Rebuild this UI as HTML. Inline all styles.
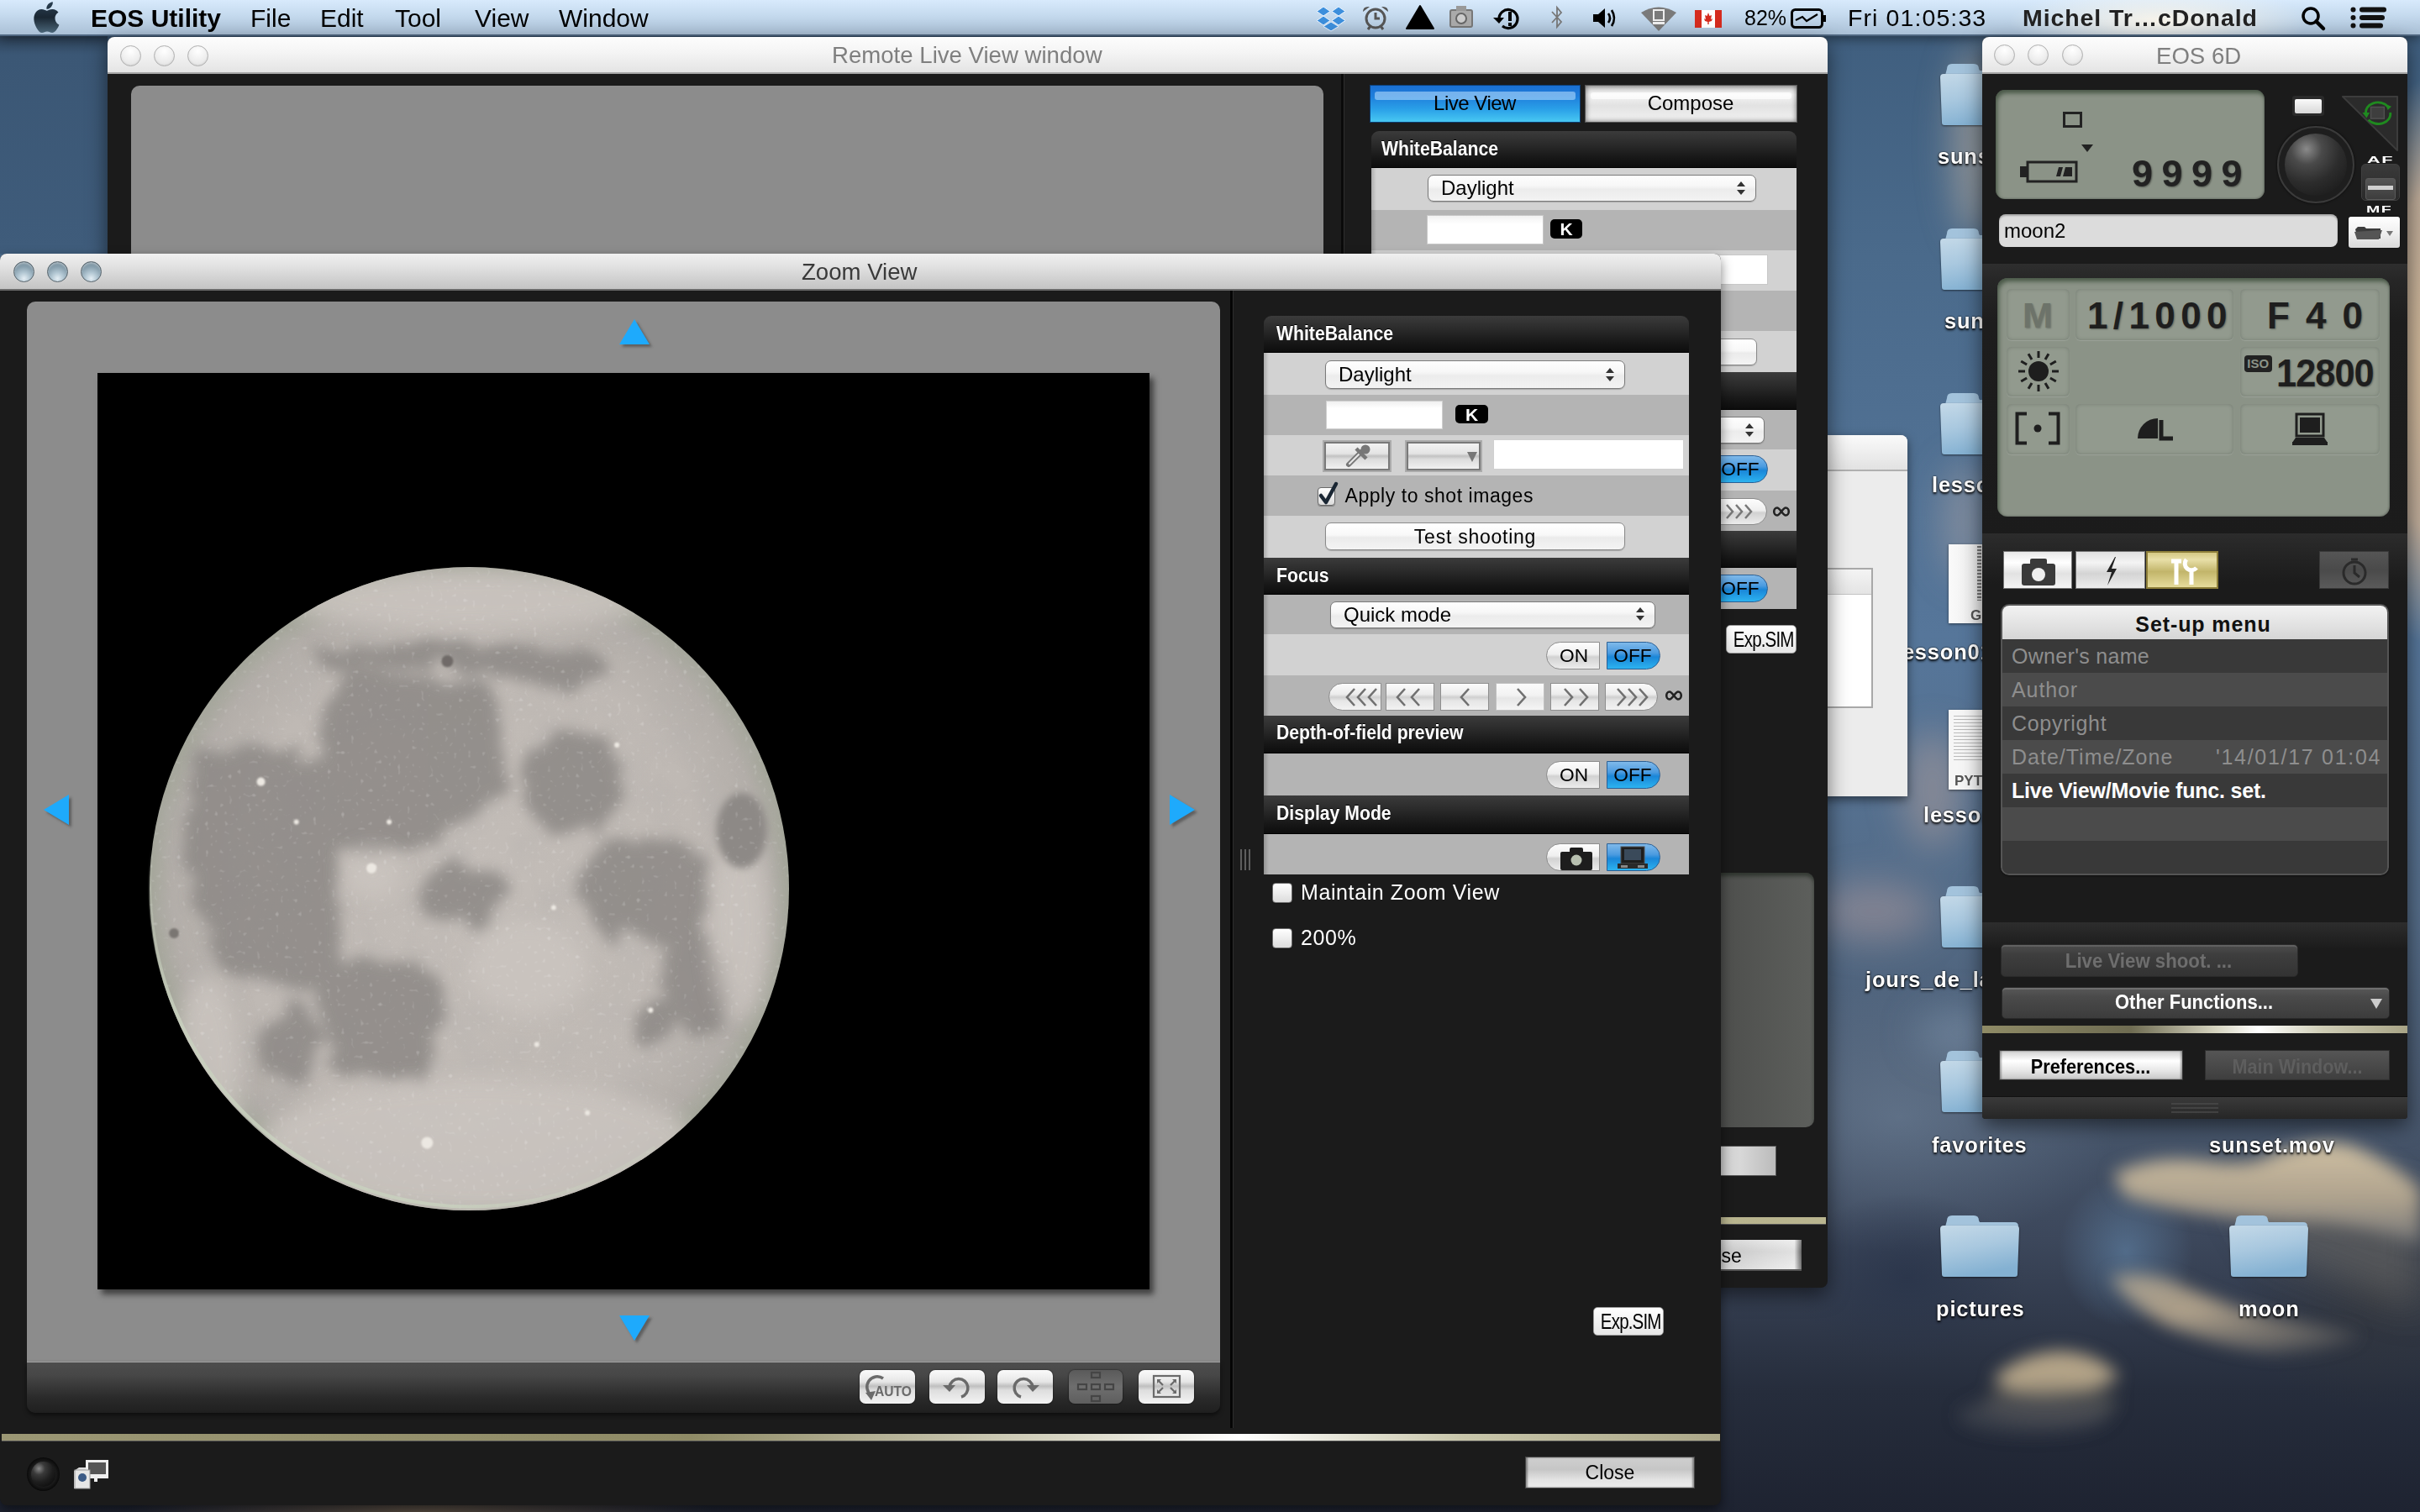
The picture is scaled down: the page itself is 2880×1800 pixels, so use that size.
<!DOCTYPE html>
<html><head><meta charset="utf-8">
<style>
*{margin:0;padding:0;box-sizing:border-box}
html,body{width:2880px;height:1800px;overflow:hidden;background:#3b5876;font-family:"Liberation Sans",sans-serif}
.a{position:absolute}
.t{position:absolute;white-space:nowrap;line-height:1;font-family:"Liberation Sans",sans-serif}
svg.a{overflow:visible}
</style></head><body>
<svg class="a" style="left:0px;top:0px;" width="2880" height="1800" viewBox="0 0 2880 1800"><defs>
<linearGradient id="sky" x1="0" y1="0" x2="0" y2="1">
<stop offset="0" stop-color="#3e5d7d"/><stop offset=".17" stop-color="#4a6a8b"/><stop offset=".42" stop-color="#56769a"/>
<stop offset=".6" stop-color="#546c88"/><stop offset=".72" stop-color="#4a5a70"/><stop offset=".82" stop-color="#3c475b"/>
<stop offset=".92" stop-color="#262d3c"/><stop offset="1" stop-color="#1e2331"/></linearGradient>
<filter id="cb1" x="-50%" y="-50%" width="200%" height="200%"><feGaussianBlur stdDeviation="10"/></filter>
<filter id="cb2" x="-50%" y="-50%" width="200%" height="200%"><feGaussianBlur stdDeviation="22"/></filter>
<filter id="cb3" x="-50%" y="-50%" width="200%" height="200%"><feGaussianBlur stdDeviation="40"/></filter>
</defs>
<rect width="2880" height="1800" fill="url(#sky)"/>
<radialGradient id="dk1"><stop offset="0" stop-color="#283349" stop-opacity=".75"/><stop offset="1" stop-color="#283349" stop-opacity="0"/></radialGradient>
<radialGradient id="dk2"><stop offset="0" stop-color="#323438" stop-opacity=".9"/><stop offset="1" stop-color="#323438" stop-opacity="0"/></radialGradient>
<radialGradient id="bl1"><stop offset="0" stop-color="#5c7c9e" stop-opacity=".7"/><stop offset="1" stop-color="#5c7c9e" stop-opacity="0"/></radialGradient>
<radialGradient id="bg1"><stop offset="0" stop-color="#d2b896"/><stop offset=".6" stop-color="#c8b098" stop-opacity=".9"/><stop offset="1" stop-color="#cdb89e" stop-opacity="0"/></radialGradient>
<radialGradient id="br1"><stop offset="0" stop-color="#6a5a48" stop-opacity=".8"/><stop offset="1" stop-color="#6a5a48" stop-opacity="0"/></radialGradient>
<linearGradient id="cA" x1="0" y1="0" x2="0" y2="1"><stop offset="0" stop-color="#dccaa8"/><stop offset=".55" stop-color="#b8aa92"/><stop offset="1" stop-color="#77787a"/></linearGradient>
<linearGradient id="cB" x1="0" y1="0" x2="1" y2="1"><stop offset="0" stop-color="#c2b296" stop-opacity=".9"/><stop offset=".4" stop-color="#cdb999"/><stop offset=".75" stop-color="#9a9080" stop-opacity=".7"/><stop offset="1" stop-color="#6a6a6a" stop-opacity=".2"/></linearGradient>
<radialGradient id="lg1"><stop offset="0" stop-color="#71849b" stop-opacity=".55"/><stop offset="1" stop-color="#71849b" stop-opacity="0"/></radialGradient>
<ellipse cx="2260" cy="1330" rx="260" ry="160" fill="url(#lg1)"/>
<ellipse cx="2270" cy="1520" rx="140" ry="100" fill="url(#dk1)"/>
<ellipse cx="2830" cy="1540" rx="170" ry="140" fill="url(#dk2)" opacity=".8"/>
<ellipse cx="2530" cy="1490" rx="80" ry="90" fill="url(#bl1)"/>
<ellipse cx="2900" cy="430" rx="120" ry="340" fill="url(#bg1)"/>
<ellipse cx="500" cy="1800" rx="350" ry="50" fill="url(#br1)"/>
<g filter="url(#cb2)">
<ellipse cx="2352" cy="170" rx="28" ry="115" fill="#cdb9a6" opacity=".55"/>
<ellipse cx="2340" cy="620" rx="30" ry="70" fill="#c0b0a8" opacity=".4"/>
<ellipse cx="2230" cy="1085" rx="70" ry="35" fill="#b8a0a0" opacity=".45"/>
<ellipse cx="2300" cy="940" rx="35" ry="70" fill="#c0a8a0" opacity=".45"/>
<ellipse cx="2330" cy="1230" rx="50" ry="30" fill="#8aa0b8" opacity=".4"/>
<path d="M2660 1420 Q2760 1400 2880 1420 L2880 1560 Q2800 1530 2700 1490Z" fill="#605f60" opacity=".7"/>
</g>
<g filter="url(#cb1)">
<path d="M2515 1398 Q2560 1375 2620 1382 Q2680 1390 2700 1376 Q2760 1352 2800 1364 Q2850 1385 2880 1415 L2880 1480 Q2820 1460 2760 1455 Q2700 1455 2640 1448 Q2580 1440 2530 1425Z" fill="url(#cA)" opacity=".92"/>
<path d="M2512 1520 Q2560 1510 2600 1532 Q2650 1555 2700 1568 Q2760 1580 2810 1588 Q2770 1612 2700 1610 Q2640 1602 2580 1578 Q2530 1552 2512 1520Z" fill="url(#cB)" opacity=".8"/>
<path d="M2372 1642 Q2400 1612 2450 1608 Q2500 1610 2522 1640 Q2490 1658 2440 1660 Q2392 1662 2372 1642Z" fill="#cbb794" opacity=".85"/>
<ellipse cx="2440" cy="1670" rx="80" ry="22" fill="#6a6760" opacity=".5"/>
<ellipse cx="2420" cy="1685" rx="90" ry="22" fill="#50525a" opacity=".5"/>
</g></svg>
<div class="a" style="left:0.0px;top:43.0px;width:128.0px;height:259.0px;background:linear-gradient(180deg,#2e435a 0px,#3b5775 22px,#3f5c7b 100%)"></div>
<svg class="a" style="left:2305px;top:73px;" width="102" height="80" viewBox="0 0 102 80"><defs><linearGradient id="fg230573" x1="0" y1="0" x2="0.3" y2="1"><stop offset="0" stop-color="#c4d9e8"/><stop offset=".5" stop-color="#a9c8df"/><stop offset="1" stop-color="#84b1d2"/></linearGradient></defs>
<path d="M12 9 Q12 3 18 3 L44 3 Q50 3 50 9 L51 11 L92 11 Q97 11 97 16 L97 20 L9 20 Z" fill="#a3c3dc"/>
<path d="M4 19 Q4 15 8 15 L94 15 Q98 15 98 19 L96 73 Q96 76 93 76 L9 76 Q6 76 6 73 Z" fill="url(#fg230573)" style="filter:drop-shadow(0 1.5px 1px rgba(0,0,0,.55))"/></svg>
<svg class="a" style="left:2305px;top:269px;" width="102" height="80" viewBox="0 0 102 80"><defs><linearGradient id="fg2305269" x1="0" y1="0" x2="0.3" y2="1"><stop offset="0" stop-color="#c4d9e8"/><stop offset=".5" stop-color="#a9c8df"/><stop offset="1" stop-color="#84b1d2"/></linearGradient></defs>
<path d="M12 9 Q12 3 18 3 L44 3 Q50 3 50 9 L51 11 L92 11 Q97 11 97 16 L97 20 L9 20 Z" fill="#a3c3dc"/>
<path d="M4 19 Q4 15 8 15 L94 15 Q98 15 98 19 L96 73 Q96 76 93 76 L9 76 Q6 76 6 73 Z" fill="url(#fg2305269)" style="filter:drop-shadow(0 1.5px 1px rgba(0,0,0,.55))"/></svg>
<svg class="a" style="left:2305px;top:465px;" width="102" height="80" viewBox="0 0 102 80"><defs><linearGradient id="fg2305465" x1="0" y1="0" x2="0.3" y2="1"><stop offset="0" stop-color="#c4d9e8"/><stop offset=".5" stop-color="#a9c8df"/><stop offset="1" stop-color="#84b1d2"/></linearGradient></defs>
<path d="M12 9 Q12 3 18 3 L44 3 Q50 3 50 9 L51 11 L92 11 Q97 11 97 16 L97 20 L9 20 Z" fill="#a3c3dc"/>
<path d="M4 19 Q4 15 8 15 L94 15 Q98 15 98 19 L96 73 Q96 76 93 76 L9 76 Q6 76 6 73 Z" fill="url(#fg2305465)" style="filter:drop-shadow(0 1.5px 1px rgba(0,0,0,.55))"/></svg>
<svg class="a" style="left:2305px;top:1052px;" width="102" height="80" viewBox="0 0 102 80"><defs><linearGradient id="fg23051052" x1="0" y1="0" x2="0.3" y2="1"><stop offset="0" stop-color="#c4d9e8"/><stop offset=".5" stop-color="#a9c8df"/><stop offset="1" stop-color="#84b1d2"/></linearGradient></defs>
<path d="M12 9 Q12 3 18 3 L44 3 Q50 3 50 9 L51 11 L92 11 Q97 11 97 16 L97 20 L9 20 Z" fill="#a3c3dc"/>
<path d="M4 19 Q4 15 8 15 L94 15 Q98 15 98 19 L96 73 Q96 76 93 76 L9 76 Q6 76 6 73 Z" fill="url(#fg23051052)" style="filter:drop-shadow(0 1.5px 1px rgba(0,0,0,.55))"/></svg>
<svg class="a" style="left:2305px;top:1248px;" width="102" height="80" viewBox="0 0 102 80"><defs><linearGradient id="fg23051248" x1="0" y1="0" x2="0.3" y2="1"><stop offset="0" stop-color="#c4d9e8"/><stop offset=".5" stop-color="#a9c8df"/><stop offset="1" stop-color="#84b1d2"/></linearGradient></defs>
<path d="M12 9 Q12 3 18 3 L44 3 Q50 3 50 9 L51 11 L92 11 Q97 11 97 16 L97 20 L9 20 Z" fill="#a3c3dc"/>
<path d="M4 19 Q4 15 8 15 L94 15 Q98 15 98 19 L96 73 Q96 76 93 76 L9 76 Q6 76 6 73 Z" fill="url(#fg23051248)" style="filter:drop-shadow(0 1.5px 1px rgba(0,0,0,.55))"/></svg>
<svg class="a" style="left:2305px;top:1444px;" width="102" height="80" viewBox="0 0 102 80"><defs><linearGradient id="fg23051444" x1="0" y1="0" x2="0.3" y2="1"><stop offset="0" stop-color="#c4d9e8"/><stop offset=".5" stop-color="#a9c8df"/><stop offset="1" stop-color="#84b1d2"/></linearGradient></defs>
<path d="M12 9 Q12 3 18 3 L44 3 Q50 3 50 9 L51 11 L92 11 Q97 11 97 16 L97 20 L9 20 Z" fill="#a3c3dc"/>
<path d="M4 19 Q4 15 8 15 L94 15 Q98 15 98 19 L96 73 Q96 76 93 76 L9 76 Q6 76 6 73 Z" fill="url(#fg23051444)" style="filter:drop-shadow(0 1.5px 1px rgba(0,0,0,.55))"/></svg>
<svg class="a" style="left:2649px;top:1444px;" width="102" height="80" viewBox="0 0 102 80"><defs><linearGradient id="fg26491444" x1="0" y1="0" x2="0.3" y2="1"><stop offset="0" stop-color="#c4d9e8"/><stop offset=".5" stop-color="#a9c8df"/><stop offset="1" stop-color="#84b1d2"/></linearGradient></defs>
<path d="M12 9 Q12 3 18 3 L44 3 Q50 3 50 9 L51 11 L92 11 Q97 11 97 16 L97 20 L9 20 Z" fill="#a3c3dc"/>
<path d="M4 19 Q4 15 8 15 L94 15 Q98 15 98 19 L96 73 Q96 76 93 76 L9 76 Q6 76 6 73 Z" fill="url(#fg26491444)" style="filter:drop-shadow(0 1.5px 1px rgba(0,0,0,.55))"/></svg>
<div class="a" style="left:2319.0px;top:648.0px;width:51.0px;height:94.0px;background:linear-gradient(90deg,#fafafa,#e8e8e8);box-shadow:0 1px 3px rgba(0,0,0,.5)"></div>
<div class="a" style="left:2353.0px;top:650.0px;width:5.0px;height:65.0px;background:repeating-linear-gradient(180deg,#777 0 2px,#ddd 2px 4px)"></div>
<div class="t" style="left:2345.0px;top:723.6px;font-size:17px;color:#555;font-weight:bold;">G</div>
<div class="a" style="left:2319.0px;top:845.0px;width:51.0px;height:95.0px;background:#f6f6f6;box-shadow:0 1px 3px rgba(0,0,0,.5)"></div>
<div class="a" style="left:2325.0px;top:852.0px;width:40.0px;height:53.0px;background:repeating-linear-gradient(180deg,#bbb 0 1px,transparent 1px 4px)"></div>
<div class="t" style="left:2326.0px;top:920.6px;font-size:17px;color:#555;font-weight:bold;">PYTH</div>
<div class="t" style="left:2306.0px;top:174.4px;font-size:25.5px;color:#fff;font-weight:bold;text-shadow:0 2px 3px rgba(0,0,0,.95),0 0 2px #000;letter-spacing:.8px">sunset</div>
<div class="t" style="left:2314.0px;top:370.4px;font-size:25.5px;color:#fff;font-weight:bold;text-shadow:0 2px 3px rgba(0,0,0,.95),0 0 2px #000;letter-spacing:.8px">sunrise</div>
<div class="t" style="left:2299.0px;top:565.4px;font-size:25.5px;color:#fff;font-weight:bold;text-shadow:0 2px 3px rgba(0,0,0,.95),0 0 2px #000;letter-spacing:.8px">lessons</div>
<div class="t" style="left:2256.0px;top:764.4px;font-size:25.5px;color:#fff;font-weight:bold;text-shadow:0 2px 3px rgba(0,0,0,.95),0 0 2px #000;letter-spacing:.8px">lesson01.zip</div>
<div class="t" style="left:2289.0px;top:958.4px;font-size:25.5px;color:#fff;font-weight:bold;text-shadow:0 2px 3px rgba(0,0,0,.95),0 0 2px #000;letter-spacing:.8px">lessons</div>
<div class="t" style="left:2220.0px;top:1154.4px;font-size:25.5px;color:#fff;font-weight:bold;text-shadow:0 2px 3px rgba(0,0,0,.95),0 0 2px #000;letter-spacing:.8px">jours_de_la_lune</div>
<div class="t" style="left:2299.0px;top:1351.4px;font-size:25.5px;color:#fff;font-weight:bold;text-shadow:0 2px 3px rgba(0,0,0,.95),0 0 2px #000;letter-spacing:.8px">favorites</div>
<div class="t" style="left:2629.0px;top:1351.4px;font-size:25.5px;color:#fff;font-weight:bold;text-shadow:0 2px 3px rgba(0,0,0,.95),0 0 2px #000;letter-spacing:.8px">sunset.mov</div>
<div class="t" style="left:2304.0px;top:1546.4px;font-size:25.5px;color:#fff;font-weight:bold;text-shadow:0 2px 3px rgba(0,0,0,.95),0 0 2px #000;letter-spacing:.8px">pictures</div>
<div class="t" style="left:2664.0px;top:1546.4px;font-size:25.5px;color:#fff;font-weight:bold;text-shadow:0 2px 3px rgba(0,0,0,.95),0 0 2px #000;letter-spacing:.8px">moon</div>
<div class="a" style="left:2100.0px;top:518.0px;width:170.0px;height:430.0px;background:#ececec;border-radius:8px 8px 0 0;box-shadow:0 4px 12px rgba(0,0,0,.5)"></div>
<div class="a" style="left:2100.0px;top:518.0px;width:170.0px;height:43.0px;background:linear-gradient(180deg,#fafafa,#e2e2e2);border-bottom:2px solid #b0b0b0;border-radius:8px 8px 0 0"></div>
<div class="a" style="left:2100.0px;top:676.0px;width:129.0px;height:167.0px;background:#fff;border:2px solid #a8a8a8"></div>
<div class="a" style="left:2102.0px;top:678.0px;width:125.0px;height:30.0px;background:linear-gradient(180deg,#f4f4f4,#e4e4e4);border-bottom:1px solid #c4c4c4"></div>
<div class="a" style="left:0.0px;top:0.0px;width:2880.0px;height:43.0px;background:linear-gradient(180deg,#d8eafc 0%,#c6dbef 40%,#a8bed4 100%);box-shadow:0 3px 14px rgba(0,0,0,.45)"></div>
<div class="a" style="left:2380.0px;top:0.0px;width:380.0px;height:43.0px;background:radial-gradient(ellipse 180px 40px at 190px 25px,rgba(255,248,235,.9),rgba(255,248,235,0) 100%)"></div>
<div class="a" style="left:0.0px;top:41.0px;width:2880.0px;height:2.0px;background:#4e6680"></div>
<svg class="a" style="left:38px;top:2px;" width="34" height="37" viewBox="0 0 34 37"><defs><linearGradient id="apg" x1="0" y1="0" x2="0" y2="1"><stop offset="0" stop-color="#2a3f52"/><stop offset=".5" stop-color="#1a2733"/><stop offset="1" stop-color="#4a6578"/></linearGradient></defs>
<path d="M27.5 19.6c0-4.6 3.8-6.8 4-6.9-2.2-3.2-5.6-3.6-6.8-3.7-2.9-.3-5.6 1.7-7.1 1.7-1.5 0-3.7-1.7-6.1-1.6-3.1 0-6 1.8-7.6 4.7-3.3 5.6-.8 14 2.4 18.6 1.6 2.2 3.4 4.8 5.8 4.7 2.3-.1 3.2-1.5 6-1.5s3.6 1.5 6.1 1.5c2.5 0 4.1-2.3 5.6-4.5 1.8-2.6 2.5-5.1 2.5-5.2-.1 0-4.8-1.8-4.8-7.8zM22.9 6.2c1.3-1.6 2.2-3.7 1.9-5.9-1.9.1-4.1 1.3-5.5 2.8-1.2 1.4-2.2 3.6-1.9 5.7 2.1.2 4.2-1 5.5-2.6z" fill="url(#apg)"/></svg>
<div class="t" style="left:108.0px;top:7.0px;font-size:30px;color:#000;font-weight:bold;">EOS Utility</div>
<div class="t" style="left:298.0px;top:7.0px;font-size:30px;color:#000;font-weight:normal;">File</div>
<div class="t" style="left:381.0px;top:7.0px;font-size:30px;color:#000;font-weight:normal;">Edit</div>
<div class="t" style="left:470.0px;top:7.0px;font-size:30px;color:#000;font-weight:normal;">Tool</div>
<div class="t" style="left:565.0px;top:7.0px;font-size:30px;color:#000;font-weight:normal;">View</div>
<div class="t" style="left:665.0px;top:7.0px;font-size:30px;color:#000;font-weight:normal;">Window</div>
<div class="t" style="left:2076.0px;top:8.8px;font-size:25px;color:#000;font-weight:normal;">82%</div>
<div class="t" style="left:2199.0px;top:7.1px;font-size:28.5px;color:#000;font-weight:normal;letter-spacing:1.1px">Fri 01:05:33</div>
<div class="t" style="left:2407.0px;top:7.1px;font-size:28.5px;color:#222;font-weight:bold;letter-spacing:.9px">Michel Tr…cDonald</div>
<svg class="a" style="left:1566px;top:6px;" width="36" height="32" viewBox="0 0 36 32"><g fill="#3d8fdc" stroke="#eaf4ff" stroke-width="1"><path d="M9 2 L1 7.5 L9 13 L17 7.5Z"/><path d="M27 2 L19 7.5 L27 13 L35 7.5Z"/><path d="M1 18.5 L9 13 L17 18.5 L9 24Z"/><path d="M35 18.5 L27 13 L19 18.5 L27 24Z"/><path d="M9 25.5 L18 20 L27 25.5 L18 31Z"/></g></svg>
<svg class="a" style="left:1619px;top:5px;" width="36" height="31" viewBox="0 0 36 31"><g fill="none" stroke="#555" stroke-width="3"><circle cx="18" cy="17" r="11"/><path d="M18 10 V17 H23"/><path d="M9 30 L12 26 M27 30 L24 26"/></g><path d="M3 9 Q3 2 11 3 Z M33 9 Q33 2 25 3Z" fill="#555"/></svg>
<svg class="a" style="left:1673px;top:6px;" width="34" height="29" viewBox="0 0 34 29"><path d="M17 1 L33 28 L1 28Z" fill="#000" stroke="#000" stroke-width="2" stroke-linejoin="round"/></svg>
<svg class="a" style="left:1725px;top:6px;" width="28" height="27" viewBox="0 0 28 27"><rect x="1" y="6" width="26" height="20" rx="2" fill="#aaa" stroke="#777" stroke-width="2"/><rect x="8" y="1" width="12" height="6" fill="#999"/><circle cx="14" cy="16" r="6" fill="#ccc" stroke="#666" stroke-width="2"/></svg>
<svg class="a" style="left:1776px;top:6px;" width="35" height="31" viewBox="0 0 35 31"><path d="M8 17 A11 11 0 1 1 12 25" fill="none" stroke="#000" stroke-width="3.2"/><path d="M1 15 L8 22 L14 15Z" fill="#000"/><rect x="19" y="8" width="4" height="11" fill="#000"/><rect x="19" y="21" width="4" height="4" fill="#000"/></svg>
<svg class="a" style="left:1845px;top:6px;" width="16" height="30" viewBox="0 0 16 30"><path d="M2 8 L13 20 L8 26 V3 L13 9 L2 21" fill="none" stroke="#777" stroke-width="1.8"/></svg>
<svg class="a" style="left:1895px;top:9px;" width="29" height="25" viewBox="0 0 29 25"><path d="M1 8 H7 L15 1 V24 L7 17 H1Z" fill="#000"/><path d="M19 7 Q23 12.5 19 18 M23 3 Q29 12.5 23 22" fill="none" stroke="#000" stroke-width="2.6"/></svg>
<svg class="a" style="left:1952px;top:6px;" width="44" height="32" viewBox="0 0 44 32"><path d="M1 9 Q22 -4 43 9 L22 31Z" fill="#7a7a7a"/><rect x="16" y="6" width="12" height="12" fill="none" stroke="#eee" stroke-width="2"/><rect x="15" y="20" width="14" height="3" fill="#eee"/></svg>
<svg class="a" style="left:2017px;top:12px;" width="32" height="21" viewBox="0 0 32 21"><rect x="0" y="0" width="32" height="21" fill="#fff"/><rect x="0" y="0" width="8" height="21" fill="#d52b1e"/><rect x="24" y="0" width="8" height="21" fill="#d52b1e"/><path d="M16 3 L17.5 7 L20 6 L19 11 L21 10 L20 13 L16.7 14 V17 H15.3 V14 L12 13 L11 10 L13 11 L12 6 L14.5 7Z" fill="#d52b1e"/></svg>
<svg class="a" style="left:2131px;top:10px;" width="43" height="24" viewBox="0 0 43 24"><rect x="1.5" y="1.5" width="36" height="21" rx="4" fill="none" stroke="#000" stroke-width="3"/><rect x="38" y="8" width="4" height="8" fill="#000"/><path d="M6 14 L14 10 L19 15 L32 7" fill="none" stroke="#000" stroke-width="2.2"/></svg>
<svg class="a" style="left:2738px;top:7px;" width="30" height="29" viewBox="0 0 30 29"><circle cx="12" cy="12" r="9" fill="none" stroke="#000" stroke-width="3.5"/><path d="M18.5 18.5 L27 27" stroke="#000" stroke-width="4.5" stroke-linecap="round"/></svg>
<svg class="a" style="left:2797px;top:8px;" width="44" height="26" viewBox="0 0 44 26"><g fill="#111"><circle cx="3.5" cy="3.5" r="3"/><circle cx="3.5" cy="13" r="3"/><circle cx="3.5" cy="22.5" r="3"/><rect x="11" y="0.5" width="32" height="6" rx="3"/><rect x="11" y="10" width="30" height="6" rx="3"/><rect x="11" y="19.5" width="28" height="6" rx="3"/></g></svg>
<div class="a" style="left:128.0px;top:44.0px;width:2047.0px;height:1489.0px;background:#1b1b1b;border-radius:8px;box-shadow:0 8px 24px rgba(0,0,0,.55)"></div>
<div class="a" style="left:128.0px;top:44.0px;width:2047.0px;height:44.0px;background:linear-gradient(180deg,#fdfdfd 0%,#f4f4f4 45%,#e4e4e4 100%);border-radius:8px 8px 0 0;border-bottom:2px solid #a6a6a6"></div>
<div class="a" style="left:143.0px;top:53.5px;width:25.0px;height:25.0px;border-radius:50%;background:radial-gradient(circle at 50% 25%,#ffffff 0%,#f0f0f0 50%,#e6e6e6 80%,#f4f4f4 100%);border:1px solid #b0b0b0;box-shadow:inset 0 -1px 2px rgba(0,0,0,.08)"></div><div class="a" style="left:183.2px;top:53.5px;width:25.0px;height:25.0px;border-radius:50%;background:radial-gradient(circle at 50% 25%,#ffffff 0%,#f0f0f0 50%,#e6e6e6 80%,#f4f4f4 100%);border:1px solid #b0b0b0;box-shadow:inset 0 -1px 2px rgba(0,0,0,.08)"></div><div class="a" style="left:223.2px;top:53.5px;width:25.0px;height:25.0px;border-radius:50%;background:radial-gradient(circle at 50% 25%,#ffffff 0%,#f0f0f0 50%,#e6e6e6 80%,#f4f4f4 100%);border:1px solid #b0b0b0;box-shadow:inset 0 -1px 2px rgba(0,0,0,.08)"></div>
<div class="t" style="left:990.0px;top:52.1px;font-size:27.6px;color:#7f7f7f;font-weight:normal;">Remote Live View window</div>
<div class="a" style="left:156.0px;top:102.0px;width:1419.0px;height:1378.0px;background:#8c8c8c;border-radius:10px 10px 0 0"></div>
<div class="a" style="left:1596.0px;top:88.0px;width:4.0px;height:1445.0px;background:#0a0a0a;border-right:1px solid #2e2e2e"></div>
<div class="a" style="left:1630.0px;top:101.0px;width:251.0px;height:45.0px;background:linear-gradient(180deg,#1a6fd2 0%,#1f7fdc 30%,#2aa0e8 65%,#48c8f2 100%);border:1px solid #0d3e75"></div>
<div class="a" style="left:1636.0px;top:109.0px;width:239.0px;height:10.0px;background:rgba(190,225,255,.55);border-radius:3px"></div>
<div class="t" style="left:1455.0px;width:600px;text-align:center;top:111.2px;font-size:24px;color:#000;font-weight:normal;letter-spacing:-.5px">Live View</div>
<div class="a" style="left:1886.0px;top:101.0px;width:253.0px;height:45.0px;background:linear-gradient(180deg,#cfcfcf 0%,#f4f4f4 25%,#e2e2e2 55%,#f2f2f2 100%);border:1px solid #555;box-shadow:inset 0 0 6px rgba(0,0,0,.55)"></div>
<div class="a" style="left:1893.0px;top:110.0px;width:239.0px;height:8.0px;background:rgba(255,255,255,.7);border-radius:3px"></div>
<div class="t" style="left:1712.0px;width:600px;text-align:center;top:111.2px;font-size:24px;color:#000;font-weight:normal;">Compose</div>
<div class="a" style="left:1632.0px;top:156.0px;width:506.0px;height:44.0px;background:linear-gradient(180deg,#3b3b3b 0%,#2b2b2b 35%,#171717 75%,#0d0d0d 100%);border-radius:9px 9px 0 0;border-bottom:1px solid #000"></div><div class="t" style="left:1644.0px;top:165.8px;font-size:23.3px;color:#fff;font-weight:bold;transform:scaleX(.91);transform-origin:0 0;text-shadow:0 -1px 0 #000">WhiteBalance</div>
<div class="a" style="left:1632.0px;top:200.0px;width:506.0px;height:50.0px;background:linear-gradient(90deg,rgba(0,0,0,.18) 0px,rgba(0,0,0,0) 6px),#d2d2d2"></div>
<div class="a" style="left:1699.0px;top:208.0px;width:391.0px;height:32.0px;border-radius:7px;background:linear-gradient(180deg,#fefefe 0%,#f7f7f7 40%,#ececec 55%,#f3f3f3 100%);border:1.5px solid #7a7a7a;box-shadow:0 1px 1px rgba(0,0,0,.2)"></div><div class="t" style="left:1715.0px;top:212.2px;font-size:24px;color:#000;font-weight:normal;">Daylight</div><svg class="a" style="left:2066px;top:215px;" width="12" height="18" viewBox="0 0 12 18"><path d="M6 1 L11 7 L1 7Z M6 17 L11 11 L1 11Z" fill="#333"/></svg>
<div class="a" style="left:1632.0px;top:250.0px;width:506.0px;height:48.0px;background:linear-gradient(90deg,rgba(0,0,0,.18) 0px,rgba(0,0,0,0) 6px),#b4b4b4"></div>
<div class="a" style="left:1698.0px;top:256.0px;width:139.0px;height:35.0px;background:linear-gradient(180deg,#f2f2f2,#fff 30%);border:1px solid #c8c8c8"></div>
<div class="a" style="left:1845.0px;top:261.0px;width:38.0px;height:23.0px;border-radius:5px;background:#000;color:#fff;font-weight:bold;font-size:21px;text-align:center;line-height:23px;font-family:'Liberation Sans',sans-serif">K</div>
<div class="a" style="left:1632.0px;top:298.0px;width:506.0px;height:48.0px;background:linear-gradient(90deg,rgba(0,0,0,.18) 0px,rgba(0,0,0,0) 6px),#d2d2d2"></div>
<div class="a" style="left:1906.0px;top:303.0px;width:198.0px;height:36.0px;background:#fff;border:1px solid #c8c8c8"></div>
<div class="a" style="left:1632.0px;top:346.0px;width:506.0px;height:48.0px;background:linear-gradient(90deg,rgba(0,0,0,.18) 0px,rgba(0,0,0,0) 6px),#b4b4b4"></div>
<div class="a" style="left:1632.0px;top:394.0px;width:506.0px;height:49.0px;background:linear-gradient(90deg,rgba(0,0,0,.18) 0px,rgba(0,0,0,0) 6px),#d2d2d2"></div>
<div class="a" style="left:1705.0px;top:403.0px;width:386.0px;height:32.0px;border-radius:7px;background:linear-gradient(180deg,#ffffff 0%,#f8f8f8 45%,#ebebeb 55%,#f4f4f4 100%);border:1.5px solid #8a8a8a;box-shadow:0 1px 1px rgba(0,0,0,.2)"></div>
<div class="a" style="left:1632.0px;top:443.0px;width:506.0px;height:45.0px;background:linear-gradient(180deg,#3b3b3b 0%,#2b2b2b 35%,#171717 75%,#0d0d0d 100%);border-radius:0;border-bottom:1px solid #000"></div><div class="t" style="left:1644.0px;top:452.8px;font-size:23.3px;color:#fff;font-weight:bold;transform:scaleX(.91);transform-origin:0 0;text-shadow:0 -1px 0 #000">Focus</div>
<div class="a" style="left:1632.0px;top:488.0px;width:506.0px;height:47.0px;background:linear-gradient(90deg,rgba(0,0,0,.18) 0px,rgba(0,0,0,0) 6px),#b4b4b4"></div>
<div class="a" style="left:1711.0px;top:496.0px;width:389.0px;height:32.0px;border-radius:7px;background:linear-gradient(180deg,#fefefe 0%,#f7f7f7 40%,#ececec 55%,#f3f3f3 100%);border:1.5px solid #7a7a7a;box-shadow:0 1px 1px rgba(0,0,0,.2)"></div><svg class="a" style="left:2076px;top:503px;" width="12" height="18" viewBox="0 0 12 18"><path d="M6 1 L11 7 L1 7Z M6 17 L11 11 L1 11Z" fill="#333"/></svg>
<div class="a" style="left:1632.0px;top:535.0px;width:506.0px;height:49.0px;background:linear-gradient(90deg,rgba(0,0,0,.18) 0px,rgba(0,0,0,0) 6px),#d2d2d2"></div>
<div class="a" style="left:1968.0px;top:542.0px;width:64.0px;height:33.0px;border-radius:17px 0 0 17px;background:linear-gradient(180deg,#fdfdfd 0%,#efefef 45%,#d2d2d2 55%,#ececec 100%);border:1.5px solid #8c8c8c"></div><div class="t" style="left:1961.0px;width:80px;text-align:center;top:547.3px;font-size:22.7px;color:#000;font-weight:normal;">ON</div><div class="a" style="left:2040.0px;top:542.0px;width:64.0px;height:33.0px;border-radius:0 17px 17px 0;background:linear-gradient(180deg,#7fb9ea 0%,#4b9be0 40%,#1a86d8 55%,#2cb3f0 100%);border:1.5px solid #2a5f95"></div><div class="t" style="left:2031.0px;width:80px;text-align:center;top:547.3px;font-size:22.7px;color:#000;font-weight:normal;">OFF</div>
<div class="a" style="left:1632.0px;top:584.0px;width:506.0px;height:48.0px;background:linear-gradient(90deg,rgba(0,0,0,.18) 0px,rgba(0,0,0,0) 6px),#b4b4b4"></div>
<div class="a" style="left:2038.0px;top:593.0px;width:65.0px;height:32.0px;border-radius:0 17px 17px 0;background:linear-gradient(180deg,#fdfdfd 0%,#efefef 45%,#d2d2d2 55%,#ececec 100%);border:1.5px solid #8c8c8c"></div>
<svg class="a" style="left:2052px;top:599px;" width="40" height="20" viewBox="0 0 40 20"><path d="M3 2 L10 10 L3 18 M14 2 L21 10 L14 18 M25 2 L32 10 L25 18" fill="none" stroke="#777" stroke-width="2.5"/></svg>
<svg class="a" style="left:2109px;top:603px;" width="22" height="12" viewBox="0 0 22 12"><path d="M6 1.5 C1 1.5 1 10.5 6 10.5 C9 10.5 13 1.5 16 1.5 C21 1.5 21 10.5 16 10.5 C13 10.5 9 1.5 6 1.5Z" fill="none" stroke="#222" stroke-width="2.6"/></svg>
<div class="a" style="left:1632.0px;top:632.0px;width:506.0px;height:44.0px;background:linear-gradient(180deg,#3b3b3b 0%,#2b2b2b 35%,#171717 75%,#0d0d0d 100%);border-radius:0;border-bottom:1px solid #000"></div><div class="t" style="left:1644.0px;top:641.8px;font-size:23.3px;color:#fff;font-weight:bold;transform:scaleX(.91);transform-origin:0 0;text-shadow:0 -1px 0 #000">Depth-of-field preview</div>
<div class="a" style="left:1632.0px;top:676.0px;width:506.0px;height:49.0px;background:linear-gradient(90deg,rgba(0,0,0,.18) 0px,rgba(0,0,0,0) 6px),#b4b4b4"></div>
<div class="a" style="left:1968.0px;top:684.0px;width:64.0px;height:33.0px;border-radius:17px 0 0 17px;background:linear-gradient(180deg,#fdfdfd 0%,#efefef 45%,#d2d2d2 55%,#ececec 100%);border:1.5px solid #8c8c8c"></div><div class="t" style="left:1961.0px;width:80px;text-align:center;top:689.3px;font-size:22.7px;color:#000;font-weight:normal;">ON</div><div class="a" style="left:2040.0px;top:684.0px;width:64.0px;height:33.0px;border-radius:0 17px 17px 0;background:linear-gradient(180deg,#7fb9ea 0%,#4b9be0 40%,#1a86d8 55%,#2cb3f0 100%);border:1.5px solid #2a5f95"></div><div class="t" style="left:2031.0px;width:80px;text-align:center;top:689.3px;font-size:22.7px;color:#000;font-weight:normal;">OFF</div>
<div class="a" style="left:2054.0px;top:744.0px;width:84.0px;height:34.0px;border-radius:5px;background:linear-gradient(180deg,#ffffff,#e6e6e6);border:1px solid #999;color:#000;font-size:25px;text-align:center;line-height:32px;letter-spacing:-1px;overflow:hidden"><span style='display:inline-block;transform:scaleX(.82)'>Exp.SIM</span></div>
<div class="a" style="left:1900.0px;top:1039.0px;width:259.0px;height:303.0px;background:linear-gradient(90deg,#444543 0%,#4b4c4a 50%,#5d5f5c 100%);border-radius:10px;box-shadow:inset 0 4px 4px rgba(20,30,20,.55)"></div>
<div class="a" style="left:1900.0px;top:1364.0px;width:214.0px;height:36.0px;background:linear-gradient(90deg,#8e8e8e,#d8d8d8 80%,#bbb);border:1px solid #555"></div>
<div class="a" style="left:128.0px;top:1449.0px;width:2045.0px;height:9.0px;background:linear-gradient(90deg,#9a9670,#b4b08c 60%,#b9b58f);border-bottom:1.5px solid #555"></div>
<div class="a" style="left:1930.0px;top:1476.0px;width:214.0px;height:37.0px;background:linear-gradient(180deg,rgba(255,255,255,.15),rgba(0,0,0,.05) 40%,rgba(255,255,255,.1)),linear-gradient(90deg,#9e9e9e 0%,#c4c4c4 40%,#e2e2e2 80%,#ececec 96%,#666 100%);border-bottom:2px solid #555"></div>
<div class="t" style="left:2014.0px;top:1483.5px;font-size:23px;color:#000;font-weight:normal;">Close</div>
<div class="a" style="left:0.0px;top:302.0px;width:2048.0px;height:1490.0px;background:#1b1b1b;border-radius:8px 8px 8px 8px;box-shadow:0 6px 14px rgba(0,0,0,.5)"></div>
<div class="a" style="left:0.0px;top:302.0px;width:2048.0px;height:44.0px;background:linear-gradient(180deg,#f0f0f0 0%,#e2e2e2 35%,#cdcdcd 80%,#c4c4c4 100%);border-radius:8px 8px 0 0;border-bottom:2px solid #6b6b6b"></div>
<div class="a" style="left:15.5px;top:311.1px;width:25.0px;height:25.0px;border-radius:50%;background:radial-gradient(circle at 50% 85%,#e4eef4 0%,#b4c8d4 30%,#8aa2b0 60%,#6a808e 100%);border:1px solid #56636b;box-shadow:inset 0 2px 2px rgba(255,255,255,.35)"></div><div class="a" style="left:55.5px;top:311.1px;width:25.0px;height:25.0px;border-radius:50%;background:radial-gradient(circle at 50% 85%,#e4eef4 0%,#b4c8d4 30%,#8aa2b0 60%,#6a808e 100%);border:1px solid #56636b;box-shadow:inset 0 2px 2px rgba(255,255,255,.35)"></div><div class="a" style="left:95.5px;top:311.1px;width:25.0px;height:25.0px;border-radius:50%;background:radial-gradient(circle at 50% 85%,#e4eef4 0%,#b4c8d4 30%,#8aa2b0 60%,#6a808e 100%);border:1px solid #56636b;box-shadow:inset 0 2px 2px rgba(255,255,255,.35)"></div>
<div class="t" style="left:954.0px;top:310.4px;font-size:27.6px;color:#3a3a3a;font-weight:normal;">Zoom View</div>
<div class="a" style="left:32.0px;top:359.0px;width:1420.0px;height:1262.0px;background:#8c8c8c;border-radius:10px 10px 0 0"></div>
<div class="a" style="left:32.0px;top:1621.0px;width:1420.0px;height:61.0px;background:linear-gradient(180deg,#4d4d4d 0%,#474747 25%,#2a2a2a 70%,#1f1f1f 100%);border-radius:0 0 10px 10px;border-top:1px solid #a0a0a0;box-shadow:0 3px 5px rgba(0,0,0,.5)"></div>
<div class="a" style="left:116.0px;top:444.0px;width:1252.0px;height:1091.0px;background:#000;box-shadow:5px 6px 7px rgba(0,0,0,.55)"></div>
<svg class="a" style="left:178px;top:675px;" width="761" height="766" viewBox="0 0 761 766"><defs>
<radialGradient id="mg" cx="0.5" cy="0.5" r="0.5"><stop offset="0" stop-color="#c3bdb8"/><stop offset=".75" stop-color="#bfb9b4"/><stop offset=".93" stop-color="#b3aea9"/><stop offset="1" stop-color="#a4a69a"/></radialGradient>
<filter id="bl" x="-30%" y="-30%" width="160%" height="160%"><feTurbulence type="fractalNoise" baseFrequency="0.025" numOctaves="3" seed="11" result="t"/><feDisplacementMap in="SourceGraphic" in2="t" scale="40" xChannelSelector="R" yChannelSelector="G"/><feGaussianBlur stdDeviation="8"/></filter>
<filter id="bl2" x="-50%" y="-50%" width="200%" height="200%"><feGaussianBlur stdDeviation="12"/></filter>
<filter id="bl3"><feGaussianBlur stdDeviation="1"/></filter>
<filter id="nz" x="0" y="0" width="100%" height="100%"><feTurbulence type="fractalNoise" baseFrequency="0.18" numOctaves="1" seed="7"/><feColorMatrix values="0 0 0 0 1  0 0 0 0 1  0 0 0 0 1  0 0 0 3 -1.9"/></filter>
<filter id="nz2" x="0" y="0" width="100%" height="100%"><feTurbulence type="fractalNoise" baseFrequency="0.02" numOctaves="3" seed="3"/><feColorMatrix values="0 0 0 0 .45  0 0 0 0 .43  0 0 0 0 .42  0 0 0 -1.6 .95"/></filter>
<clipPath id="mc"><ellipse cx="380" cy="378" rx="379" ry="376"/></clipPath>
</defs>
<g transform="translate(-1,-2) scale(1.00395,1.0186)">
<ellipse cx="380" cy="378" rx="379" ry="376" fill="url(#mg)"/>
<g clip-path="url(#mc)">
<rect x="0" y="0" width="760" height="760" filter="url(#nz2)" opacity=".35"/>
<g fill="#8c8885" filter="url(#bl)" opacity=".85">
<path d="M230 125 Q300 120 400 135 Q420 165 425 260 Q380 290 345 320 Q300 345 260 340 Q210 335 195 300 Q190 200 230 125Z"/>
<path d="M60 220 Q120 200 200 230 Q230 300 220 420 Q250 480 240 500 Q170 510 90 470 Q50 400 40 300Z"/>
<ellipse cx="500" cy="255" rx="62" ry="62"/>
<path d="M520 330 Q600 300 650 340 Q680 400 650 440 Q590 450 540 430 Q500 390 520 330Z"/>

<ellipse cx="650" cy="490" rx="42" ry="55"/>
<ellipse cx="600" cy="530" rx="24" ry="28"/>
<path d="M205 465 Q280 450 350 480 Q360 560 330 600 Q270 610 220 590 Q195 540 205 465Z"/>
<ellipse cx="168" cy="560" rx="34" ry="40"/>
<ellipse cx="370" cy="385" rx="50" ry="38"/>
<path d="M200 95 Q330 80 520 100 Q540 120 500 125 Q350 115 210 125Z"/>
<ellipse cx="470" cy="120" rx="70" ry="25"/>
</g>
<g fill="#cbc5c0" filter="url(#bl2)" opacity=".85">
<ellipse cx="390" cy="680" rx="260" ry="80"/>
<ellipse cx="700" cy="420" rx="35" ry="110"/>
<ellipse cx="380" cy="40" rx="220" ry="35"/>
<ellipse cx="450" cy="470" rx="70" ry="55"/>
<ellipse cx="265" cy="360" rx="35" ry="30"/>
<ellipse cx="70" cy="600" rx="40" ry="120"/>
</g>
<ellipse cx="703" cy="310" rx="30" ry="44" fill="#8d8986" style="filter:blur(4px)"/>
<rect x="0" y="0" width="760" height="760" filter="url(#nz)" opacity=".35"/>
<g fill="#ece8e2" filter="url(#bl3)">
<circle cx="133" cy="253" r="5"/><circle cx="264" cy="354" r="6"/><circle cx="330" cy="675" r="7"/><circle cx="175" cy="300" r="3"/><circle cx="595" cy="520" r="3"/><circle cx="480" cy="400" r="3"/><circle cx="285" cy="300" r="3"/><circle cx="555" cy="210" r="3"/><circle cx="460" cy="560" r="3"/><circle cx="520" cy="640" r="3"/>
</g>
<circle cx="354" cy="112" r="7" fill="#6f6b68" filter="url(#bl3)"/>
<circle cx="30" cy="430" r="6" fill="#7a7672" filter="url(#bl3)"/>
</g>
<defs><linearGradient id="rimg" x1="0" y1="0" x2="1" y2="1"><stop offset="0" stop-color="#c9d2bf" stop-opacity="0"/><stop offset=".25" stop-color="#c9d2bf" stop-opacity=".8"/><stop offset=".8" stop-color="#c9d2bf" stop-opacity=".8"/><stop offset="1" stop-color="#c9d2bf" stop-opacity="0"/></linearGradient></defs><path d="M4 330 A379 376 0 0 0 600 680" fill="none" stroke="url(#rimg)" stroke-width="4"/>
</g>
</svg>
<svg width="0" height="0" style="position:absolute"><defs><filter id="ash"><feGaussianBlur stdDeviation="1.5"/></filter></defs></svg>
<svg class="a" style="left:737px;top:380px;" width="40" height="36" viewBox="0 0 40 36"><polygon points="18,0 36,30 0,30" fill="#3a3a3a" opacity=".55" transform="translate(3,3)" filter="url(#ash)"/><polygon points="18,0 36,30 0,30" fill="#1eaafc"/></svg>
<svg class="a" style="left:737px;top:1566px;" width="40" height="36" viewBox="0 0 40 36"><polygon points="0,0 36,0 18,30" fill="#3a3a3a" opacity=".55" transform="translate(3,3)" filter="url(#ash)"/><polygon points="0,0 36,0 18,30" fill="#1eaafc"/></svg>
<svg class="a" style="left:52px;top:946px;" width="36" height="40" viewBox="0 0 36 40"><polygon points="30,0 30,36 0,18" fill="#3a3a3a" opacity=".55" transform="translate(3,3)" filter="url(#ash)"/><polygon points="30,0 30,36 0,18" fill="#1eaafc"/></svg>
<svg class="a" style="left:1392px;top:946px;" width="36" height="40" viewBox="0 0 36 40"><polygon points="0,0 30,18 0,36" fill="#3a3a3a" opacity=".55" transform="translate(3,3)" filter="url(#ash)"/><polygon points="0,0 30,18 0,36" fill="#1eaafc"/></svg>
<div class="a" style="left:1023.0px;top:1631.0px;width:66.0px;height:40.0px;border-radius:7px;background:linear-gradient(180deg,#fafafa 0%,#e6e6e6 35%,#bfbfbf 48%,#dedede 60%,#f3f3f3 100%);box-shadow:0 0 2px rgba(0,0,0,.8)"><svg width="66" height="40" style="position:absolute;left:0;top:0"><path d="M14 30 A11 11 0 1 1 28 10" fill="none" stroke="#6a6a6a" stroke-width="3.5"/><path d="M7 27 L14 36 L19 25Z" fill="#6a6a6a"/><text x="18" y="31" font-family="Liberation Sans" font-weight="bold" font-size="17" fill="#6a6a6a" textLength="44" lengthAdjust="spacingAndGlyphs">AUTO</text></svg></div>
<div class="a" style="left:1106.0px;top:1631.0px;width:66.0px;height:40.0px;border-radius:7px;background:linear-gradient(180deg,#fafafa 0%,#e6e6e6 35%,#bfbfbf 48%,#dedede 60%,#f3f3f3 100%);box-shadow:0 0 2px rgba(0,0,0,.8)"><svg width="66" height="40" style="position:absolute;left:0;top:0"><path d="M24 20 A11 11 0 1 1 38 32" fill="none" stroke="#6a6a6a" stroke-width="3.5"/><path d="M16 18 L24 26 L31 18Z" fill="#6a6a6a"/></svg></div>
<div class="a" style="left:1187.0px;top:1631.0px;width:66.0px;height:40.0px;border-radius:7px;background:linear-gradient(180deg,#fafafa 0%,#e6e6e6 35%,#bfbfbf 48%,#dedede 60%,#f3f3f3 100%);box-shadow:0 0 2px rgba(0,0,0,.8)"><svg width="66" height="40" style="position:absolute;left:0;top:0"><path d="M42 20 A11 11 0 1 0 28 32" fill="none" stroke="#6a6a6a" stroke-width="3.5"/><path d="M35 18 L42 26 L50 18Z" fill="#6a6a6a"/></svg></div>
<div class="a" style="left:1272.0px;top:1631.0px;width:64.0px;height:40.0px;border-radius:7px;background:linear-gradient(180deg,#5a5a5a,#6e6e6e 50%,#5e5e5e);box-shadow:0 0 2px rgba(0,0,0,.8)"><svg width="64" height="40" style="position:absolute;left:0;top:0"><g fill="none" stroke="#454545" stroke-width="2.2"><rect x="27" y="3" width="10" height="6"/><rect x="27" y="17" width="10" height="6"/><rect x="27" y="31" width="10" height="6"/><rect x="11" y="17" width="10" height="6"/><rect x="43" y="17" width="10" height="6"/></g></svg></div>
<div class="a" style="left:1355.0px;top:1631.0px;width:66.0px;height:40.0px;border-radius:7px;background:linear-gradient(180deg,#fafafa 0%,#e6e6e6 35%,#bfbfbf 48%,#dedede 60%,#f3f3f3 100%);box-shadow:0 0 2px rgba(0,0,0,.8)"><svg width="66" height="40" style="position:absolute;left:0;top:0"><rect x="18" y="7" width="31" height="25" fill="none" stroke="#6a6a6a" stroke-width="2.2"/><path d="M23 12 L29 18 M44 12 L38 18 M23 27 L29 21 M44 27 L38 21" stroke="#6a6a6a" stroke-width="2.2"/><path d="M22 11 h5 l-5 5z M45 11 h-5 l5 5z M22 28 h5 l-5 -5z M45 28 h-5 l5 -5z" fill="#6a6a6a"/></svg></div>
<div class="a" style="left:1464.0px;top:346.0px;width:4.0px;height:1354.0px;background:#050505;border-right:1px solid #2d2d2d"></div>
<svg class="a" style="left:1475px;top:1011px;" width="16" height="26" viewBox="0 0 16 26"><path d="M2 0V25 M7 0V25 M12 0V25" stroke="#666" stroke-width="1.8"/></svg>
<div class="a" style="left:1504.0px;top:376.0px;width:506.0px;height:44.0px;background:linear-gradient(180deg,#3b3b3b 0%,#2b2b2b 35%,#171717 75%,#0d0d0d 100%);border-radius:9px 9px 0 0;border-bottom:1px solid #000"></div><div class="t" style="left:1519.0px;top:385.8px;font-size:23.3px;color:#fff;font-weight:bold;transform:scaleX(.91);transform-origin:0 0;text-shadow:0 -1px 0 #000">WhiteBalance</div>
<div class="a" style="left:1504.0px;top:420.0px;width:506.0px;height:50.0px;background:linear-gradient(90deg,rgba(0,0,0,.18) 0px,rgba(0,0,0,0) 6px),#d2d2d2"></div>
<div class="a" style="left:1577.0px;top:429.0px;width:357.0px;height:34.0px;border-radius:7px;background:linear-gradient(180deg,#fefefe 0%,#f7f7f7 40%,#ececec 55%,#f3f3f3 100%);border:1.5px solid #7a7a7a;box-shadow:0 1px 1px rgba(0,0,0,.2)"></div><div class="t" style="left:1593.0px;top:434.2px;font-size:24px;color:#000;font-weight:normal;">Daylight</div><svg class="a" style="left:1910px;top:437px;" width="12" height="18" viewBox="0 0 12 18"><path d="M6 1 L11 7 L1 7Z M6 17 L11 11 L1 11Z" fill="#333"/></svg>
<div class="a" style="left:1504.0px;top:470.0px;width:506.0px;height:47.5px;background:linear-gradient(90deg,rgba(0,0,0,.18) 0px,rgba(0,0,0,0) 6px),#b4b4b4"></div>
<div class="a" style="left:1578.0px;top:476.5px;width:139.0px;height:34.5px;background:linear-gradient(180deg,#f0f0f0,#fff 25%);border:1.5px solid #d0d0d0"></div>
<div class="a" style="left:1732.0px;top:482.0px;width:39.0px;height:22.0px;border-radius:5px;background:#000;color:#fff;font-weight:bold;font-size:21px;text-align:center;line-height:23px;font-family:'Liberation Sans',sans-serif">K</div>
<div class="a" style="left:1504.0px;top:517.5px;width:506.0px;height:48.5px;background:linear-gradient(90deg,rgba(0,0,0,.18) 0px,rgba(0,0,0,0) 6px),#d2d2d2"></div>
<div class="a" style="left:1576.0px;top:526.0px;width:78.0px;height:34.0px;background:linear-gradient(180deg,#f2f2f2 0%,#e4e4e4 40%,#c2c2c2 50%,#dcdcdc 62%,#f0f0f0 100%);border:2px solid #797979;box-shadow:0 0 0 2px #ababab"><svg width="78" height="34" style="position:absolute;left:-2px;top:-2px"><path d="M29 27 L44 12" stroke="#777" stroke-width="6" stroke-linecap="round"/><path d="M30 26 L43 13" stroke="#e6e6e6" stroke-width="2.2" stroke-linecap="round"/><path d="M38 8 L50 20" stroke="#777" stroke-width="4.5"/><circle cx="49" cy="9" r="5.5" fill="#777"/></svg></div>
<div class="a" style="left:1674.0px;top:526.0px;width:88.0px;height:34.0px;background:linear-gradient(180deg,#f2f2f2 0%,#e4e4e4 40%,#c2c2c2 50%,#dcdcdc 62%,#f0f0f0 100%);border:2px solid #797979;box-shadow:0 0 0 2px #ababab"><svg width="88" height="34" style="position:absolute;left:-2px;top:-2px"><path d="M72 12 L84 12 L78 24Z" fill="#777"/></svg></div>
<div class="a" style="left:1776.5px;top:523.0px;width:227.5px;height:36.0px;background:#fff;border:1px solid #d0d0d0"></div>
<div class="a" style="left:1504.0px;top:566.0px;width:506.0px;height:48.0px;background:linear-gradient(90deg,rgba(0,0,0,.18) 0px,rgba(0,0,0,0) 6px),#b4b4b4"></div>
<div class="a" style="left:1567.5px;top:580.0px;width:21.0px;height:21.5px;border-radius:4px;background:linear-gradient(180deg,#ffffff,#dcdcdc);border:1px solid #6a6a6a;box-shadow:0 1px 1px rgba(0,0,0,.3)"></div><svg class="a" style="left:1567px;top:573px;" width="26" height="30" viewBox="0 0 26 30"><path d="M5 17 L11 25 L23 3" fill="none" stroke="#1a2633" stroke-width="4.5" stroke-linecap="round" stroke-linejoin="round"/></svg>
<div class="t" style="left:1600.5px;top:578.5px;font-size:23px;color:#000;font-weight:normal;letter-spacing:.55px">Apply to shot images</div>
<div class="a" style="left:1504.0px;top:614.0px;width:506.0px;height:50.0px;background:linear-gradient(90deg,rgba(0,0,0,.18) 0px,rgba(0,0,0,0) 6px),#d2d2d2"></div>
<div class="a" style="left:1577.0px;top:622.0px;width:357.0px;height:33.0px;border-radius:7px;background:linear-gradient(180deg,#ffffff 0%,#f8f8f8 45%,#ebebeb 55%,#f4f4f4 100%);border:1.5px solid #8a8a8a;box-shadow:0 1px 1px rgba(0,0,0,.2)"></div>
<div class="t" style="left:1455.5px;width:600px;text-align:center;top:627.5px;font-size:23px;color:#000;font-weight:normal;letter-spacing:.75px">Test shooting</div>
<div class="a" style="left:1504.0px;top:664.0px;width:506.0px;height:44.0px;background:linear-gradient(180deg,#3b3b3b 0%,#2b2b2b 35%,#171717 75%,#0d0d0d 100%);border-radius:0;border-bottom:1px solid #000"></div><div class="t" style="left:1519.0px;top:673.8px;font-size:23.3px;color:#fff;font-weight:bold;transform:scaleX(.91);transform-origin:0 0;text-shadow:0 -1px 0 #000">Focus</div>
<div class="a" style="left:1504.0px;top:708.0px;width:506.0px;height:47.0px;background:linear-gradient(90deg,rgba(0,0,0,.18) 0px,rgba(0,0,0,0) 6px),#b4b4b4"></div>
<div class="a" style="left:1583.0px;top:715.5px;width:387.0px;height:32.5px;border-radius:7px;background:linear-gradient(180deg,#fefefe 0%,#f7f7f7 40%,#ececec 55%,#f3f3f3 100%);border:1.5px solid #7a7a7a;box-shadow:0 1px 1px rgba(0,0,0,.2)"></div><div class="t" style="left:1599.0px;top:719.9px;font-size:24px;color:#000;font-weight:normal;">Quick mode</div><svg class="a" style="left:1946px;top:722px;" width="12" height="18" viewBox="0 0 12 18"><path d="M6 1 L11 7 L1 7Z M6 17 L11 11 L1 11Z" fill="#333"/></svg>
<div class="a" style="left:1504.0px;top:755.0px;width:506.0px;height:48.5px;background:linear-gradient(90deg,rgba(0,0,0,.18) 0px,rgba(0,0,0,0) 6px),#d2d2d2"></div>
<div class="a" style="left:1840.0px;top:764.0px;width:64.0px;height:33.0px;border-radius:17px 0 0 17px;background:linear-gradient(180deg,#fdfdfd 0%,#efefef 45%,#d2d2d2 55%,#ececec 100%);border:1.5px solid #8c8c8c"></div><div class="t" style="left:1833.0px;width:80px;text-align:center;top:769.3px;font-size:22.7px;color:#000;font-weight:normal;">ON</div><div class="a" style="left:1912.0px;top:764.0px;width:64.0px;height:33.0px;border-radius:0 17px 17px 0;background:linear-gradient(180deg,#7fb9ea 0%,#4b9be0 40%,#1a86d8 55%,#2cb3f0 100%);border:1.5px solid #2a5f95"></div><div class="t" style="left:1903.0px;width:80px;text-align:center;top:769.3px;font-size:22.7px;color:#000;font-weight:normal;">OFF</div>
<div class="a" style="left:1504.0px;top:803.5px;width:506.0px;height:48.0px;background:linear-gradient(90deg,rgba(0,0,0,.18) 0px,rgba(0,0,0,0) 6px),#b4b4b4"></div>
<div class="a" style="left:1580.5px;top:812.5px;width:63.0px;height:33.0px;border-radius:17px 0 0 17px;background:linear-gradient(180deg,#fbfbfb 0%,#ececec 40%,#cfcfcf 52%,#e6e6e6 65%,#f2f2f2 100%);border:1.5px solid #8e8e8e"><svg width="63" height="33" style="position:absolute;left:0;top:0"><path d="M30 6 L21 16 L30 26 M43 6 L34 16 L43 26 M56 6 L47 16 L56 26" fill="none" stroke="#707070" stroke-width="2.6"/></svg></div>
<div class="a" style="left:1649.0px;top:812.5px;width:57.5px;height:33.0px;border-radius:0;background:linear-gradient(180deg,#fbfbfb 0%,#ececec 40%,#cfcfcf 52%,#e6e6e6 65%,#f2f2f2 100%);border:1.5px solid #8e8e8e"><svg width="58" height="33" style="position:absolute;left:0;top:0"><path d="M22 6 L13 16 L22 26 M39 6 L30 16 L39 26" fill="none" stroke="#707070" stroke-width="2.6"/></svg></div>
<div class="a" style="left:1714.0px;top:812.5px;width:58.0px;height:33.0px;border-radius:0;background:linear-gradient(180deg,#fbfbfb 0%,#ececec 40%,#cfcfcf 52%,#e6e6e6 65%,#f2f2f2 100%);border:1.5px solid #8e8e8e"><svg width="58" height="33" style="position:absolute;left:0;top:0"><path d="M33 6 L24 16 L33 26" fill="none" stroke="#707070" stroke-width="2.6"/></svg></div>
<div class="a" style="left:1780.0px;top:812.5px;width:57.5px;height:33.0px;border-radius:0;background:linear-gradient(180deg,#fbfbfb,#f2f2f2 45%,#e6e6e6 55%,#f5f5f5);border:1px solid #c0c0c0"><svg width="58" height="33" style="position:absolute;left:0;top:0"><path d="M25 6 L34 16 L25 26" fill="none" stroke="#707070" stroke-width="2.6"/></svg></div>
<div class="a" style="left:1845.0px;top:812.5px;width:57.5px;height:33.0px;border-radius:0;background:linear-gradient(180deg,#fbfbfb 0%,#ececec 40%,#cfcfcf 52%,#e6e6e6 65%,#f2f2f2 100%);border:1.5px solid #8e8e8e"><svg width="58" height="33" style="position:absolute;left:0;top:0"><path d="M16 6 L25 16 L16 26 M34 6 L43 16 L34 26" fill="none" stroke="#707070" stroke-width="2.6"/></svg></div>
<div class="a" style="left:1910.0px;top:812.5px;width:62.5px;height:33.0px;border-radius:0 17px 17px 0;background:linear-gradient(180deg,#fbfbfb 0%,#ececec 40%,#cfcfcf 52%,#e6e6e6 65%,#f2f2f2 100%);border:1.5px solid #8e8e8e"><svg width="62" height="33" style="position:absolute;left:0;top:0"><path d="M14 6 L23 16 L14 26 M27 6 L36 16 L27 26 M40 6 L49 16 L40 26" fill="none" stroke="#707070" stroke-width="2.6"/></svg></div>
<svg class="a" style="left:1981px;top:822px;" width="22" height="12" viewBox="0 0 22 12"><path d="M6 1.5 C1 1.5 1 10.5 6 10.5 C9 10.5 13 1.5 16 1.5 C21 1.5 21 10.5 16 10.5 C13 10.5 9 1.5 6 1.5Z" fill="none" stroke="#222" stroke-width="2.6"/></svg>
<div class="a" style="left:1504.0px;top:851.5px;width:506.0px;height:45.5px;background:linear-gradient(180deg,#3b3b3b 0%,#2b2b2b 35%,#171717 75%,#0d0d0d 100%);border-radius:0;border-bottom:1px solid #000"></div><div class="t" style="left:1519.0px;top:861.3px;font-size:23.3px;color:#fff;font-weight:bold;transform:scaleX(.91);transform-origin:0 0;text-shadow:0 -1px 0 #000">Depth-of-field preview</div>
<div class="a" style="left:1504.0px;top:897.0px;width:506.0px;height:50.0px;background:linear-gradient(90deg,rgba(0,0,0,.18) 0px,rgba(0,0,0,0) 6px),#b4b4b4"></div>
<div class="a" style="left:1840.0px;top:906.0px;width:64.0px;height:33.0px;border-radius:17px 0 0 17px;background:linear-gradient(180deg,#fdfdfd 0%,#efefef 45%,#d2d2d2 55%,#ececec 100%);border:1.5px solid #8c8c8c"></div><div class="t" style="left:1833.0px;width:80px;text-align:center;top:911.3px;font-size:22.7px;color:#000;font-weight:normal;">ON</div><div class="a" style="left:1912.0px;top:906.0px;width:64.0px;height:33.0px;border-radius:0 17px 17px 0;background:linear-gradient(180deg,#7fb9ea 0%,#4b9be0 40%,#1a86d8 55%,#2cb3f0 100%);border:1.5px solid #2a5f95"></div><div class="t" style="left:1903.0px;width:80px;text-align:center;top:911.3px;font-size:22.7px;color:#000;font-weight:normal;">OFF</div>
<div class="a" style="left:1504.0px;top:947.0px;width:506.0px;height:45.5px;background:linear-gradient(180deg,#3b3b3b 0%,#2b2b2b 35%,#171717 75%,#0d0d0d 100%);border-radius:0;border-bottom:1px solid #000"></div><div class="t" style="left:1519.0px;top:956.8px;font-size:23.3px;color:#fff;font-weight:bold;transform:scaleX(.91);transform-origin:0 0;text-shadow:0 -1px 0 #000">Display Mode</div>
<div class="a" style="left:1504.0px;top:992.5px;width:506.0px;height:48.5px;background:linear-gradient(90deg,rgba(0,0,0,.18) 0px,rgba(0,0,0,0) 6px),#b4b4b4"></div>
<div class="a" style="left:1840.0px;top:1004.0px;width:64.0px;height:33.0px;border-radius:17px 0 0 17px;background:linear-gradient(180deg,#fdfdfd 0%,#efefef 45%,#d2d2d2 55%,#ececec 100%);border:1.5px solid #8c8c8c"><svg width="64" height="33" style="position:absolute;left:0;top:0"><rect x="16" y="9" width="38" height="22" rx="2" fill="#1d1d1d"/><rect x="27" y="4" width="16" height="7" rx="2" fill="#1d1d1d"/><circle cx="35" cy="19" r="6.5" fill="#b8c0b0"/></svg></div>
<div class="a" style="left:1912.0px;top:1004.0px;width:64.0px;height:33.0px;border-radius:0 17px 17px 0;background:linear-gradient(180deg,#7fb9ea 0%,#4b9be0 40%,#1a86d8 55%,#2cb3f0 100%);border:1.5px solid #2a5f95"><svg width="64" height="33" style="position:absolute;left:0;top:0"><rect x="16" y="3" width="28" height="20" fill="#1e1e1e" stroke="#555" stroke-width="1"/><rect x="20" y="6" width="20" height="13" fill="#3a4a5a"/><rect x="12" y="23" width="36" height="6" fill="#2a2a2a"/><rect x="16" y="25" width="8" height="3" fill="#888"/><rect x="36" y="25" width="8" height="3" fill="#888"/></svg></div>
<div class="a" style="left:1514.0px;top:1051.0px;width:24.0px;height:24.0px;border-radius:4px;background:linear-gradient(180deg,#ffffff,#dcdcdc);border:1px solid #6a6a6a;box-shadow:0 1px 1px rgba(0,0,0,.3)"></div>
<div class="t" style="left:1548.0px;top:1049.8px;font-size:25px;color:#fff;font-weight:normal;letter-spacing:.6px">Maintain Zoom View</div>
<div class="a" style="left:1514.0px;top:1105.0px;width:24.0px;height:24.0px;border-radius:4px;background:linear-gradient(180deg,#ffffff,#dcdcdc);border:1px solid #6a6a6a;box-shadow:0 1px 1px rgba(0,0,0,.3)"></div>
<div class="t" style="left:1548.0px;top:1103.8px;font-size:25px;color:#fff;font-weight:normal;letter-spacing:.6px">200%</div>
<div class="a" style="left:1896.0px;top:1556.0px;width:84.0px;height:34.0px;border-radius:5px;background:linear-gradient(180deg,#ffffff,#e6e6e6);border:1px solid #999;color:#000;font-size:25px;text-align:center;line-height:32px;letter-spacing:-1px;overflow:hidden"><span style='display:inline-block;transform:scaleX(.82)'>Exp.SIM</span></div>
<div class="a" style="left:2.0px;top:1707.0px;width:2045.0px;height:8.5px;background:linear-gradient(90deg,#9b9774 0%,#8f8b66 40%,#d8d6c4 62%,#ffffff 72%,#c8c6aa 85%,#aca889 100%);border-bottom:1px solid #555"></div>
<div class="a" style="left:1815.0px;top:1734.0px;width:202.0px;height:38.0px;background:linear-gradient(180deg,#cfcfcf 0%,#c6c6c6 40%,#e4e4e4 75%,#ececec 100%);border:1.5px solid #444;box-shadow:inset 2px 0 2px rgba(0,0,0,.35),inset -2px 0 2px rgba(0,0,0,.35)"></div>
<div class="t" style="left:1616.0px;width:600px;text-align:center;top:1742.2px;font-size:23px;color:#000;font-weight:normal;">Close</div>
<div class="a" style="left:32.0px;top:1735.0px;width:39.0px;height:40.0px;border-radius:50%;background:radial-gradient(circle at 50% 50%,#222 0%,#1a1a1a 55%,#080808 72%,#3a3a3a 80%,#2a2a2a 100%)"></div>
<div class="a" style="left:37.0px;top:1740.0px;width:29.0px;height:30.0px;border-radius:50%;background:radial-gradient(circle at 32% 28%,#888 0%,#3a3a3a 25%,#1e1e1e 55%,#050505 100%)"></div>
<svg class="a" style="left:88px;top:1737px;" width="43" height="36" viewBox="0 0 43 36"><rect x="14" y="1" width="27" height="22" fill="#eee"/><rect x="17" y="4" width="21" height="14" fill="#555"/><rect x="24" y="23" width="4" height="4" fill="#eee"/><path d="M0 14 L6 10 H14 V35 H0Z" fill="#ddd"/><rect x="1" y="13" width="18" height="22" fill="#e6e6e6" stroke="#999"/><circle cx="10" cy="22" r="5" fill="#3b5a86"/></svg>
<div class="a" style="left:2359.0px;top:44.0px;width:506.0px;height:1288.0px;background:#1b1b1b;border-radius:8px 8px 4px 4px;box-shadow:0 8px 24px rgba(0,0,0,.55)"></div>
<div class="a" style="left:2359.0px;top:44.0px;width:506.0px;height:44.0px;background:linear-gradient(180deg,#fdfdfd 0%,#f4f4f4 45%,#e4e4e4 100%);border-radius:8px 8px 0 0;border-bottom:2px solid #a6a6a6"></div>
<div class="a" style="left:2373.1px;top:53.3px;width:25.0px;height:25.0px;border-radius:50%;background:radial-gradient(circle at 50% 25%,#ffffff 0%,#f0f0f0 50%,#e6e6e6 80%,#f4f4f4 100%);border:1px solid #b0b0b0;box-shadow:inset 0 -1px 2px rgba(0,0,0,.08)"></div><div class="a" style="left:2413.0px;top:53.3px;width:25.0px;height:25.0px;border-radius:50%;background:radial-gradient(circle at 50% 25%,#ffffff 0%,#f0f0f0 50%,#e6e6e6 80%,#f4f4f4 100%);border:1px solid #b0b0b0;box-shadow:inset 0 -1px 2px rgba(0,0,0,.08)"></div><div class="a" style="left:2453.5px;top:53.3px;width:25.0px;height:25.0px;border-radius:50%;background:radial-gradient(circle at 50% 25%,#ffffff 0%,#f0f0f0 50%,#e6e6e6 80%,#f4f4f4 100%);border:1px solid #b0b0b0;box-shadow:inset 0 -1px 2px rgba(0,0,0,.08)"></div>
<div class="t" style="left:2566.0px;top:53.1px;font-size:27.6px;color:#7f7f7f;font-weight:normal;">EOS 6D</div>
<div class="a" style="left:2374.5px;top:106.5px;width:320.5px;height:130.5px;background:#8b9387;border-radius:11px;box-shadow:inset 2px 4px 5px rgba(20,40,20,.55),inset -1px -1px 2px rgba(0,0,0,.2)"></div>
<svg class="a" style="left:2454px;top:132px;" width="26" height="22" viewBox="0 0 26 22"><rect x="2.5" y="2.5" width="20" height="16" fill="none" stroke="#222" stroke-width="3"/></svg>
<svg class="a" style="left:2476px;top:171px;" width="16" height="11" viewBox="0 0 16 11"><path d="M1 1 L15 1 L8 10Z" fill="#222"/></svg>
<svg class="a" style="left:2403px;top:190px;" width="72" height="30" viewBox="0 0 72 30"><rect x="1" y="8" width="9" height="13" fill="#222"/><rect x="10" y="3" width="58" height="23" fill="none" stroke="#222" stroke-width="3"/><path d="M47 9 L52 9 L49 20 L44 20Z M55 9 L63 9 L63 20 L52 20Z" fill="#222"/></svg>
<div class="t" style="left:2537.0px;top:184.4px;font-size:45px;color:#222;font-weight:bold;letter-spacing:10.5px;text-shadow:1px 1px 2px rgba(0,0,0,.4)">9999</div>
<div class="a" style="left:2728.0px;top:114.0px;width:38.0px;height:24.0px;background:#2a2a2a;border-radius:3px"></div>
<div class="a" style="left:2731.0px;top:117.5px;width:31.5px;height:17.0px;background:linear-gradient(180deg,#fafafa,#d8d8d8);border-radius:2px"></div>
<svg class="a" style="left:2786px;top:113px;" width="70" height="68" viewBox="0 0 70 68"><path d="M2 2 L67 2 L67 66Z" fill="#2b2b2b" stroke="#3c3c3c" stroke-width="2" stroke-linejoin="round"/><g transform="translate(24,8) scale(.72)"><rect x="16" y="9" width="22" height="19" fill="#3e3e3e" stroke="#505050" stroke-width="2"/><path d="M8 20 A20 16 0 0 1 44 8" fill="none" stroke="#1f8a1f" stroke-width="4"/><path d="M48 18 A20 16 0 0 1 12 30" fill="none" stroke="#1f8a1f" stroke-width="4"/><path d="M2 18 L9 27 L14 18Z M40 4 L50 8 L44 14Z" fill="#1f8a1f"/></g></svg>
<div class="a" style="left:2710.0px;top:149.5px;width:92.0px;height:92.0px;border-radius:50%;background:#1e1e1e;border:2px solid #3a3a3a;box-shadow:0 0 3px rgba(0,0,0,.8)"></div>
<div class="a" style="left:2719.0px;top:158.5px;width:74.0px;height:74.0px;border-radius:50%;background:radial-gradient(circle at 35% 25%,#8a8a8a 0%,#4a4a4a 25%,#2c2c2c 55%,#1f1f1f 80%,#333 100%)"></div>
<div class="t" style="left:2817.0px;top:180.6px;font-size:14px;color:#fff;font-weight:bold;letter-spacing:1px;transform:scale(1.55,.72);transform-origin:0 100%">AF</div>
<div class="a" style="left:2810.0px;top:194.5px;width:46.0px;height:44.5px;background:linear-gradient(180deg,#3a3a3a,#2a2a2a);border-radius:5px;border:1px solid #404040"></div>
<div class="a" style="left:2815.0px;top:212.0px;width:36.0px;height:25.5px;background:linear-gradient(180deg,#555,#3d3d3d);border-radius:3px;border:1px solid #5a5a5a"></div>
<div class="a" style="left:2818.0px;top:220.5px;width:30.0px;height:5.5px;background:#cfcfcf"></div>
<div class="t" style="left:2816.0px;top:240.1px;font-size:14px;color:#fff;font-weight:bold;letter-spacing:1px;transform:scale(1.4,.72);transform-origin:0 100%">MF</div>
<div class="a" style="left:2378.5px;top:254.5px;width:403.0px;height:39.0px;background:#dcdcdc;border-radius:8px;box-shadow:inset 0 2px 2px rgba(0,0,0,.25)"></div>
<div class="t" style="left:2385.0px;top:263.2px;font-size:24px;color:#000;font-weight:normal;">moon2</div>
<div class="a" style="left:2794.5px;top:257.5px;width:61.0px;height:37.0px;background:linear-gradient(180deg,#ffffff,#f0f0f0 50%,#dadada);border-radius:3px;box-shadow:0 0 2px rgba(0,0,0,.6)"></div>
<svg class="a" style="left:2800px;top:265px;" width="50" height="24" viewBox="0 0 50 24"><path d="M3 8 L6 5 L14 5 L16 7 L33 7 L33 19 L6 19Z" fill="#3c3c3c"/><path d="M2 11 L35 9 L31 20 L5 20Z" fill="#555"/><path d="M40 10 L48 10 L44 16Z" fill="#777"/></svg>
<div class="a" style="left:2359.0px;top:314.0px;width:506.0px;height:326.0px;background:linear-gradient(180deg,#2e2e2e 0px,#262626 20px,#1d1d1d 70px,#1b1b1b 100%)"></div>
<div class="a" style="left:2377.0px;top:330.5px;width:467.0px;height:284.5px;background:#8b9387;border-radius:12px;box-shadow:inset 2px 4px 5px rgba(20,40,20,.55),inset -1px -1px 2px rgba(0,0,0,.2)"></div>
<div class="a" style="left:2388.0px;top:344.0px;width:74.5px;height:60.5px;background:#929a8e;border-radius:6px;box-shadow:inset 0 0 4px rgba(60,70,60,.35),0 1px 1px rgba(255,255,255,.15)"></div>
<div class="a" style="left:2470.0px;top:344.0px;width:188.0px;height:60.5px;background:#929a8e;border-radius:6px;box-shadow:inset 0 0 4px rgba(60,70,60,.35),0 1px 1px rgba(255,255,255,.15)"></div>
<div class="a" style="left:2666.0px;top:344.0px;width:166.0px;height:60.5px;background:#929a8e;border-radius:6px;box-shadow:inset 0 0 4px rgba(60,70,60,.35),0 1px 1px rgba(255,255,255,.15)"></div>
<div class="a" style="left:2388.0px;top:412.5px;width:74.5px;height:59.5px;background:#929a8e;border-radius:6px;box-shadow:inset 0 0 4px rgba(60,70,60,.35),0 1px 1px rgba(255,255,255,.15)"></div>
<div class="a" style="left:2666.0px;top:412.5px;width:166.0px;height:59.5px;background:#929a8e;border-radius:6px;box-shadow:inset 0 0 4px rgba(60,70,60,.35),0 1px 1px rgba(255,255,255,.15)"></div>
<div class="a" style="left:2388.0px;top:480.5px;width:74.5px;height:60.0px;background:#929a8e;border-radius:6px;box-shadow:inset 0 0 4px rgba(60,70,60,.35),0 1px 1px rgba(255,255,255,.15)"></div>
<div class="a" style="left:2470.0px;top:480.5px;width:188.0px;height:60.0px;background:#929a8e;border-radius:6px;box-shadow:inset 0 0 4px rgba(60,70,60,.35),0 1px 1px rgba(255,255,255,.15)"></div>
<div class="a" style="left:2666.0px;top:480.5px;width:166.0px;height:60.0px;background:#929a8e;border-radius:6px;box-shadow:inset 0 0 4px rgba(60,70,60,.35),0 1px 1px rgba(255,255,255,.15)"></div>
<div class="t" style="left:2407.0px;top:354.1px;font-size:43px;color:#6d736a;font-weight:bold;text-shadow:1px 1px 2px rgba(0,0,0,.25)">M</div>
<div class="t" style="left:2484.0px;top:353.7px;font-size:44px;color:#1e1e1e;font-weight:bold;letter-spacing:6.4px;text-shadow:1px 1px 2px rgba(0,0,0,.35)">1/1000</div>
<div class="t" style="left:2698.0px;top:353.7px;font-size:44px;color:#1e1e1e;font-weight:bold;letter-spacing:3.4px;text-shadow:1px 1px 2px rgba(0,0,0,.35)">F 4 0</div>
<svg class="a" style="left:2401px;top:417px;" width="50" height="50" viewBox="0 0 50 50"><circle cx="25" cy="25" r="12" fill="#1e1e1e"/><line x1="41.0" y1="25.0" x2="49.0" y2="25.0" stroke="#1e1e1e" stroke-width="3"/><line x1="38.9" y1="33.0" x2="45.8" y2="37.0" stroke="#1e1e1e" stroke-width="3"/><line x1="33.0" y1="38.9" x2="37.0" y2="45.8" stroke="#1e1e1e" stroke-width="3"/><line x1="25.0" y1="41.0" x2="25.0" y2="49.0" stroke="#1e1e1e" stroke-width="3"/><line x1="17.0" y1="38.9" x2="13.0" y2="45.8" stroke="#1e1e1e" stroke-width="3"/><line x1="11.1" y1="33.0" x2="4.2" y2="37.0" stroke="#1e1e1e" stroke-width="3"/><line x1="9.0" y1="25.0" x2="1.0" y2="25.0" stroke="#1e1e1e" stroke-width="3"/><line x1="11.1" y1="17.0" x2="4.2" y2="13.0" stroke="#1e1e1e" stroke-width="3"/><line x1="17.0" y1="11.1" x2="13.0" y2="4.2" stroke="#1e1e1e" stroke-width="3"/><line x1="25.0" y1="9.0" x2="25.0" y2="1.0" stroke="#1e1e1e" stroke-width="3"/><line x1="33.0" y1="11.1" x2="37.0" y2="4.2" stroke="#1e1e1e" stroke-width="3"/><line x1="38.9" y1="17.0" x2="45.8" y2="13.0" stroke="#1e1e1e" stroke-width="3"/></svg>
<div class="a" style="left:2670.5px;top:422.5px;width:33.5px;height:20.0px;background:#222;border-radius:4px;color:#8b9387;font-size:15px;line-height:20px;text-align:center;font-weight:bold">ISO</div>
<div class="t" style="left:2709.0px;top:419.7px;font-size:47px;color:#1e1e1e;font-weight:bold;letter-spacing:-1px;transform:scaleX(.92);transform-origin:0 0;text-shadow:1px 1px 2px rgba(0,0,0,.35)">12800</div>
<svg class="a" style="left:2398px;top:490px;" width="54" height="40" viewBox="0 0 54 40"><path d="M14 2.5 H2.5 V37.5 H14 M40 2.5 H51.5 V37.5 H40" fill="none" stroke="#1e1e1e" stroke-width="4"/><circle cx="27" cy="20" r="4.5" fill="#1e1e1e"/></svg>
<svg class="a" style="left:2543px;top:496px;" width="45" height="28" viewBox="0 0 45 28"><path d="M1 26 A24 24 0 0 1 25 2 V26Z" fill="#1e1e1e"/><path d="M29 4 V26 H43" fill="none" stroke="#1e1e1e" stroke-width="5"/></svg>
<svg class="a" style="left:2727px;top:491px;" width="44" height="40" viewBox="0 0 44 40"><rect x="6" y="2" width="32" height="26" fill="none" stroke="#1e1e1e" stroke-width="3"/><rect x="10" y="6" width="24" height="18" fill="#1e1e1e"/><path d="M1 36 L5 30 H39 L43 36Z" fill="#1e1e1e"/><rect x="1" y="35" width="42" height="4" fill="#1e1e1e"/></svg>
<div class="a" style="left:2359.0px;top:635.0px;width:506.0px;height:465.0px;background:linear-gradient(180deg,#2c2c2c 0px,#232323 30px,#1b1b1b 60px,#1b1b1b 100%)"></div>
<div class="a" style="left:2384.0px;top:655.5px;width:82.0px;height:45.0px;background:linear-gradient(180deg,#e9e9e9,#ffffff 30%,#e2e2e2 60%,#f4f4f4);border:1px solid #777"><svg width="82" height="45" style="position:absolute;left:0;top:0"><rect x="21" y="14" width="40" height="26" rx="3" fill="#3a3a3a"/><rect x="31" y="8" width="20" height="8" rx="2" fill="#3a3a3a"/><circle cx="41" cy="27" r="8" fill="#eee"/></svg></div>
<div class="a" style="left:2470.0px;top:655.5px;width:83.0px;height:45.0px;background:linear-gradient(180deg,#e0e0e0,#f4f4f4 30%,#d4d4d4 60%,#ececec);border:1px solid #777"><svg width="83" height="45" style="position:absolute;left:0;top:0"><path d="M46 6 L36 24 L42 24 L37 40 L48 20 L42 20 L47 6Z" fill="#222"/></svg></div>
<div class="a" style="left:2554.0px;top:655.5px;width:85.5px;height:45.0px;background:linear-gradient(180deg,#d4c884 0%,#e8dfa8 20%,#c2b56a 55%,#e6dc9c 100%);border:2px solid #8e7f3a"><svg width="85" height="45" style="position:absolute;left:0;top:0"><path d="M28 10 H40 M34 8 V38" stroke="#fff" stroke-width="5"/><path d="M52 38 V22 M46 8 A7 7 0 0 0 58 18" fill="none" stroke="#fff" stroke-width="5"/></svg></div>
<div class="a" style="left:2760.0px;top:655.5px;width:82.5px;height:45.0px;background:linear-gradient(180deg,#555,#4a4a4a 50%,#5a5a5a);border:1px solid #3a3a3a"><svg width="82" height="45" style="position:absolute;left:0;top:0"><circle cx="41" cy="25" r="13" fill="none" stroke="#2a2a2a" stroke-width="3"/><path d="M41 16 V25 L47 30 M37 9 H45" fill="none" stroke="#2a2a2a" stroke-width="3"/></svg></div>
<div class="a" style="left:2381.0px;top:718.5px;width:462.0px;height:323.0px;background:#3b3b3b;border-radius:10px;border:2px solid #555;box-shadow:0 1px 2px rgba(0,0,0,.5)"></div>
<div class="a" style="left:2383.0px;top:720.5px;width:458.0px;height:40.0px;background:linear-gradient(180deg,#f2f2f2,#d6d6d6);border-radius:8px 8px 0 0"></div>
<div class="t" style="left:2322.0px;width:600px;text-align:center;top:730.8px;font-size:25px;color:#111;font-weight:bold;letter-spacing:.9px">Set-up menu</div>
<div class="a" style="left:2383.0px;top:760.5px;width:458.0px;height:40.0px;background:#393939"></div>
<div class="a" style="left:2383.0px;top:800.5px;width:458.0px;height:40.5px;background:#4b4b4b"></div>
<div class="a" style="left:2383.0px;top:841.0px;width:458.0px;height:40.0px;background:#393939"></div>
<div class="a" style="left:2383.0px;top:881.0px;width:458.0px;height:40.0px;background:#4b4b4b"></div>
<div class="a" style="left:2383.0px;top:921.0px;width:458.0px;height:40.0px;background:#393939"></div>
<div class="a" style="left:2383.0px;top:961.0px;width:458.0px;height:40.0px;background:#4b4b4b"></div>
<div class="a" style="left:2383.0px;top:1001.0px;width:458.0px;height:38.5px;background:#393939;border-radius:0 0 8px 8px"></div>
<div class="t" style="left:2394.0px;top:768.8px;font-size:25px;color:#8e8e8e;font-weight:normal;letter-spacing:.3px">Owner's name</div>
<div class="t" style="left:2394.0px;top:808.8px;font-size:25px;color:#8e8e8e;font-weight:normal;letter-spacing:.9px">Author</div>
<div class="t" style="left:2394.0px;top:848.8px;font-size:25px;color:#8e8e8e;font-weight:normal;letter-spacing:.7px">Copyright</div>
<div class="t" style="left:2394.0px;top:888.8px;font-size:25px;color:#8e8e8e;font-weight:normal;letter-spacing:1px">Date/Time/Zone</div>
<div class="t" style="left:2637.0px;top:888.8px;font-size:25px;color:#8e8e8e;font-weight:normal;letter-spacing:1.7px">'14/01/17 01:04</div>
<div class="t" style="left:2394.0px;top:928.8px;font-size:25px;color:#fff;font-weight:bold;letter-spacing:-.2px">Live View/Movie func. set.</div>
<div class="a" style="left:2359.0px;top:1098.0px;width:506.0px;height:32.0px;background:linear-gradient(180deg,#2d2d2d,#1b1b1b)"></div>
<div class="a" style="left:2380.5px;top:1124.0px;width:354.5px;height:39.0px;background:linear-gradient(180deg,#4d4d4d 0%,#3e3e3e 30%,#333 100%);border-radius:5px;border:1px solid #2a2a2a;box-shadow:inset 0 2px 0 rgba(255,255,255,.12)"></div>
<div class="t" style="left:2257.0px;width:600px;text-align:center;top:1132.1px;font-size:24.7px;color:#6e6e6e;font-weight:bold;transform:scaleX(.9)">Live View shoot. ...</div>
<div class="a" style="left:2382.0px;top:1175.0px;width:462.0px;height:38.0px;background:linear-gradient(180deg,#585858 0%,#4a4a4a 30%,#3c3c3c 100%);border-radius:5px;border:1px solid #2a2a2a;box-shadow:inset 0 2px 0 rgba(255,255,255,.15)"></div>
<div class="t" style="left:2311.0px;width:600px;text-align:center;top:1181.1px;font-size:24.7px;color:#fff;font-weight:bold;transform:scaleX(.89)">Other Functions...</div>
<svg class="a" style="left:2820px;top:1188px;" width="16" height="14" viewBox="0 0 16 14"><path d="M1 1 L15 1 L8 13Z" fill="#ccc"/></svg>
<div class="a" style="left:2359.0px;top:1221.0px;width:506.0px;height:8.5px;background:linear-gradient(90deg,#8f8b66 0%,#6f6c52 35%,#d6d4c0 55%,#ffffff 65%,#cfcdb6 80%,#a8a486 100%)"></div>
<div class="a" style="left:2379.0px;top:1249.5px;width:219.0px;height:36.5px;background:linear-gradient(180deg,#d0d0d0 0%,#ffffff 35%,#e6e6e6 70%,#c8c8c8 100%);border:1px solid #333;box-shadow:inset 2px 0 2px rgba(0,0,0,.3),inset -2px 0 2px rgba(0,0,0,.3)"></div>
<div class="t" style="left:2188.0px;width:600px;text-align:center;top:1257.7px;font-size:24px;color:#000;font-weight:bold;transform:scaleX(.905)">Preferences...</div>
<div class="a" style="left:2624.0px;top:1249.5px;width:220.0px;height:36.5px;background:linear-gradient(180deg,#555 0%,#4a4a4a 50%,#3e3e3e 100%);border:1px solid #2f2f2f"></div>
<div class="t" style="left:2434.0px;width:600px;text-align:center;top:1257.7px;font-size:24px;color:#5e5e5e;font-weight:bold;transform:scaleX(.9)">Main Window...</div>
<div class="a" style="left:2359.0px;top:1305.0px;width:506.0px;height:27.0px;background:linear-gradient(180deg,#3a3a3a,#262626);border-radius:0 0 4px 4px;border-top:1px solid #111"></div>
<svg class="a" style="left:2582px;top:1311px;" width="60" height="18" viewBox="0 0 60 18"><path d="M2 3 H58 M2 8 H58 M2 13 H58" stroke="#4a4a4a" stroke-width="1.6"/></svg>
</body></html>
